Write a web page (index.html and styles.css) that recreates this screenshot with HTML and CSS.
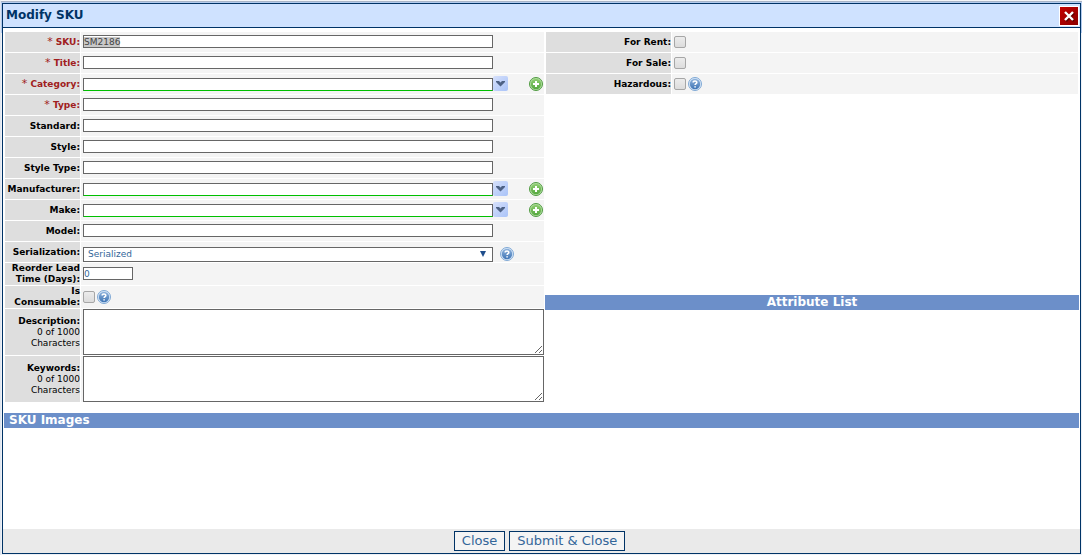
FILE: index.html
```html
<!DOCTYPE html>
<html lang="en">
<head>
  <meta charset="UTF-8">
  <meta name="viewport" content="width=device-width, initial-scale=1.0">
  <title>Modify SKU</title>
  <link rel="stylesheet" href="styles.css">
</head>
<body>
  <!-- shared icons -->
  <svg class="defs" aria-hidden="true">
    <defs>
      <linearGradient id="g-green" x1="0" y1="0" x2="0" y2="1">
        <stop offset="0" stop-color="#8fce72"/>
        <stop offset="1" stop-color="#55a83f"/>
      </linearGradient>
      <linearGradient id="g-blue" x1="0" y1="0" x2="0" y2="1">
        <stop offset="0" stop-color="#8fb3dc"/>
        <stop offset="1" stop-color="#3f75b5"/>
      </linearGradient>
    </defs>
    <symbol id="icon-add" viewBox="0 0 14 14">
      <circle cx="7" cy="7" r="6.5" fill="#b5dfa3" stroke="#4f9a41"/>
      <circle cx="7" cy="7" r="5.2" fill="url(#g-green)"/>
      <path d="M6 4h2v2h2v2H8v2H6V8H4V6h2z" fill="#fff"/>
    </symbol>
    <symbol id="icon-help" viewBox="0 0 14 14">
      <circle cx="7" cy="7" r="6.5" fill="#d8e7f8" stroke="#7fa8d4"/>
      <circle cx="7" cy="7" r="5.2" fill="url(#g-blue)"/>
      <path d="M5.200 5.600C5.200 3.500 8.800 3.500 8.800 5.500C8.800 6.700 7.100 6.600 7.100 8.100M7.100 9.200V10.600" fill="none" stroke="#fff" stroke-width="1.600"/>
    </symbol>
    <symbol id="icon-down" viewBox="0 0 15 15">
      <path d="M3 5h3l1.500 1.500L9 5h3v1L7.500 10.500L3 6z" fill="#4d6185"/>
    </symbol>
  </svg>

  <form class="dialog">
    <header class="dialog-header">
      <h1>Modify SKU</h1>
      <button type="button" class="btn-x" aria-label="Close window">
        <svg viewBox="0 0 18 18"><path d="M6 6l8 8M14 6l-8 8" stroke="#600000" stroke-width="2.500"/><path d="M5 5l8 8M13 5l-8 8" stroke="#fff" stroke-width="2.400"/></svg>
      </button>
    </header>

    <div class="dialog-body">
      <div class="columns">
        <div class="fields">
          <div class="row required">
            <div class="label"><span>*</span> <label for="sku">SKU:</label></div>
            <div class="field"><input type="text" id="sku" value="SM2186"></div>
          </div>
          <div class="row required">
            <div class="label"><span>*</span> <label for="title">Title:</label></div>
            <div class="field"><input type="text" id="title"></div>
          </div>
          <div class="row required">
            <div class="label"><span>*</span> <label for="category">Category:</label></div>
            <div class="field combo">
              <input type="text" id="category">
              <button type="button" class="btn-down" aria-label="Show categories"><svg><use href="#icon-down"/></svg></button>
              <button type="button" class="btn-icon add" aria-label="Add category"><svg><use href="#icon-add"/></svg></button>
            </div>
          </div>
          <div class="row required">
            <div class="label"><span>*</span> <label for="type">Type:</label></div>
            <div class="field"><input type="text" id="type"></div>
          </div>
          <div class="row">
            <div class="label"><label for="standard">Standard:</label></div>
            <div class="field"><input type="text" id="standard"></div>
          </div>
          <div class="row">
            <div class="label"><label for="style">Style:</label></div>
            <div class="field"><input type="text" id="style"></div>
          </div>
          <div class="row">
            <div class="label"><label for="style-type">Style Type:</label></div>
            <div class="field"><input type="text" id="style-type"></div>
          </div>
          <div class="row">
            <div class="label"><label for="manufacturer">Manufacturer:</label></div>
            <div class="field combo">
              <input type="text" id="manufacturer">
              <button type="button" class="btn-down" aria-label="Show manufacturers"><svg><use href="#icon-down"/></svg></button>
              <button type="button" class="btn-icon add" aria-label="Add manufacturer"><svg><use href="#icon-add"/></svg></button>
            </div>
          </div>
          <div class="row">
            <div class="label"><label for="make">Make:</label></div>
            <div class="field combo">
              <input type="text" id="make">
              <button type="button" class="btn-down" aria-label="Show makes"><svg><use href="#icon-down"/></svg></button>
              <button type="button" class="btn-icon add" aria-label="Add make"><svg><use href="#icon-add"/></svg></button>
            </div>
          </div>
          <div class="row">
            <div class="label"><label for="model">Model:</label></div>
            <div class="field"><input type="text" id="model"></div>
          </div>
          <div class="row">
            <div class="label"><label for="serialization">Serialization:</label></div>
            <div class="field select-field">
              <select id="serialization"><option>Serialized</option></select>
              <button type="button" class="btn-icon" aria-label="Serialization help"><svg><use href="#icon-help"/></svg></button>
            </div>
          </div>
          <div class="row two-line">
            <div class="label"><label for="lead">Reorder Lead Time (Days):</label></div>
            <div class="field"><input type="text" id="lead" class="short" value="0"></div>
          </div>
          <div class="row two-line">
            <div class="label"><label for="consumable">Is Consumable:</label></div>
            <div class="field with-help">
              <input type="checkbox" id="consumable">
              <button type="button" class="btn-icon" aria-label="Consumable help"><svg><use href="#icon-help"/></svg></button>
            </div>
          </div>
          <div class="row area">
            <div class="label"><label for="description">Description:</label><small>0 of 1000 Characters</small></div>
            <div class="field"><textarea id="description"></textarea></div>
          </div>
          <div class="row area">
            <div class="label"><label for="keywords">Keywords:</label><small>0 of 1000 Characters</small></div>
            <div class="field"><textarea id="keywords"></textarea></div>
          </div>
        </div>

        <div class="side">
          <div class="fields flags">
            <div class="row">
              <div class="label"><label for="rent">For Rent:</label></div>
              <div class="field"><input type="checkbox" id="rent"></div>
            </div>
            <div class="row">
              <div class="label"><label for="sale">For Sale:</label></div>
              <div class="field"><input type="checkbox" id="sale"></div>
            </div>
            <div class="row">
              <div class="label"><label for="hazardous">Hazardous:</label></div>
              <div class="field with-help">
                <input type="checkbox" id="hazardous">
                <button type="button" class="btn-icon" aria-label="Hazardous help"><svg><use href="#icon-help"/></svg></button>
              </div>
            </div>
          </div>
          <section class="attributes">
            <h2 class="bar centered">Attribute List</h2>
          </section>
        </div>
      </div>

      <h2 class="bar">SKU Images</h2>
    </div>

    <footer class="dialog-footer">
      <button type="button" class="btn">Close</button>
      <button type="submit" class="btn">Submit &amp; Close</button>
    </footer>
  </form>

  <script>
    // start with the SKU selected so it can be typed over
    document.getElementById("sku").select();
  </script>
</body>
</html>
```
FILE: styles.css
```css
* {
  box-sizing: border-box;
}
body {
  margin: 0;
  padding: 2px 1px 1px;
  height: 100vh;
  overflow: hidden;
  border-top: 1px solid #f4f6fa;
  border-left: 1px solid #dfe6f0;
  background: linear-gradient(#a9b4c6 2px, #b3cbee 2px, #b3cbee 33px, #eef1f6 33px);
  font-family: Verdana, "DejaVu Sans", sans-serif;
  font-size: 9px;
  line-height: 11px;
  color: #000;
}
.defs {
  position: absolute;
  width: 0;
  height: 0;
}
h1, h2 {
  margin: 0;
}
button, input, select, textarea {
  margin: 0;
  padding: 0;
  font: inherit;
}
.dialog {
  display: flex;
  flex-direction: column;
  height: 100%;
  border: 1px solid #003366;
  background: #fff;
}

/* title bar */
.dialog-header {
  display: flex;
  align-items: center;
  justify-content: space-between;
  height: 24px;
  padding: 0 1px 0 3px;
  border-bottom: 1px solid #003366;
  background: #cfe2ff;
}
.dialog-header h1 {
  font-size: 12px;
  line-height: 16px;
  padding-bottom: 1px;
  color: #003366;
}
.btn-x {
  width: 20px;
  height: 20px;
  border: 1px solid #fff;
  background: linear-gradient(135deg, #c40000, #8c0000);
}
.btn-x svg {
  display: block;
  width: 18px;
  height: 18px;
}

/* body */
.dialog-body {
  flex: 1;
  padding: 4px 1px 0;
}
.columns {
  display: grid;
  grid-template-columns: 541px 1fr;
  margin-bottom: 11px;
}
.fields {
  display: flex;
  flex-direction: column;
  gap: 1px;
  padding: 0 1px;
}
.row {
  display: grid;
  grid-template-columns: 75px 1fr;
  gap: 1px;
  height: 20px;
}
.flags .row {
  grid-template-columns: 125px 1fr;
}
.row.two-line {
  height: 22px;
}
.row.area {
  height: 46px;
}
.label {
  align-content: center;
  background: #dedede;
  text-align: right;
  font-weight: bold;
}
.label span {
  font-size: 11px;
  font-weight: normal;
}
.label small {
  display: block;
  font-size: 9px;
  font-weight: normal;
}
.required .label {
  color: #a02020;
}
.field {
  display: flex;
  align-items: center;
  padding: 0 0 1px 2px;
  background: #f4f4f4;
}
.field.with-help,
.area .field {
  padding-bottom: 0;
}
input[type="text"] {
  width: 410px;
  height: 13px;
  border: 1px solid #666;
  background: #fff;
  color: #336699;
}
#sku::selection {
  background: #c8c8c8;
  color: #444;
}
input[type="text"]:focus {
  outline: none;
}
input[type="text"].short {
  width: 50px;
}
.field.combo {
  align-items: flex-end;
  padding-bottom: 3px;
}
.combo input[type="text"] {
  border-bottom-color: #00c000;
}
.btn-down {
  width: 15px;
  height: 15px;
  border: 0;
  border-radius: 2px;
  background: linear-gradient(135deg, #d6e0fb, #a9c3f8);
}
.btn-down svg {
  display: block;
  width: 15px;
  height: 15px;
}
.btn-icon {
  width: 14px;
  height: 14px;
  border: 0;
  background: none;
}
.btn-icon svg {
  display: block;
  width: 14px;
  height: 14px;
}
.btn-icon.add {
  margin-left: auto;
  margin-right: 1px;
}
select {
  appearance: none;
  width: 410px;
  height: 15px;
  padding-left: 4px;
  border: 1px solid #666;
  border-radius: 0;
  background: #fff;
  color: #336699;
}
.field.select-field {
  position: relative;
  align-items: flex-end;
  padding-bottom: 0;
}
.select-field .btn-icon {
  margin: 0 0 1px 7px;
}
.select-field::after {
  content: "";
  position: absolute;
  left: 399px;
  bottom: 5px;
  border: 3px solid transparent;
  border-top: 6px solid #1f4e8c;
  border-bottom: 0;
  pointer-events: none;
}
input[type="checkbox"] {
  appearance: none;
  width: 12px;
  height: 12px;
  margin-right: 2px;
  border: 1px solid #a6a6a6;
  border-radius: 2px;
  background: linear-gradient(#ececec, #dcdcdc);
}
textarea {
  width: 100%;
  height: 46px;
  border: 1px solid #666;
  border-radius: 0;
  background: #fff;
}

/* right column */
.side {
  display: flex;
  flex-direction: column;
}
.attributes {
  margin-top: auto;
  height: 107px;
}
.bar {
  padding-left: 5px;
  background: #6c8fc9;
  color: #fff;
  font-size: 12px;
  line-height: 15px;
}
.bar.centered {
  padding-left: 0;
  text-align: center;
}

/* footer */
.dialog-footer {
  display: flex;
  justify-content: center;
  align-items: center;
  gap: 4px;
  height: 24px;
  padding-right: 4px;
  background: #eaeaea;
}
.btn {
  height: 20px;
  padding: 0 7px;
  border: 1px solid #003366;
  background: #f4f4f4;
  color: #336699;
  font-size: 13px;
  line-height: 18px;
}
```
